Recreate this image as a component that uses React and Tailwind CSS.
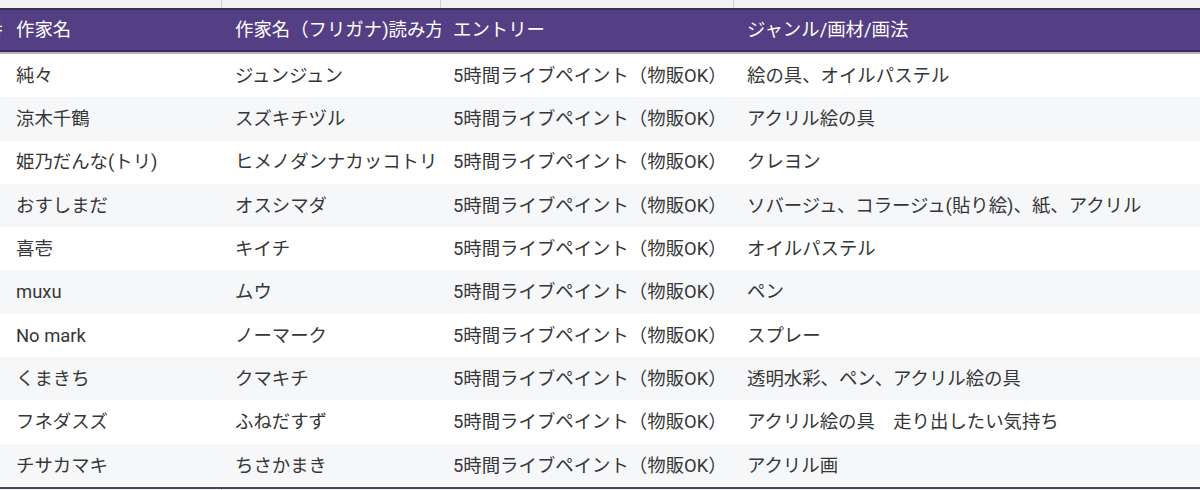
import React from "react";

const rows = [
  ["純々", "ジュンジュン", "5時間ライブペイント（物販OK）", "絵の具、オイルパステル"],
  ["涼木千鶴", "スズキチヅル", "5時間ライブペイント（物販OK）", "アクリル絵の具"],
  ["姫乃だんな(トリ)", "ヒメノダンナカッコトリ", "5時間ライブペイント（物販OK）", "クレヨン"],
  ["おすしまだ", "オスシマダ", "5時間ライブペイント（物販OK）", "ソバージュ、コラージュ(貼り絵)、紙、アクリル"],
  ["喜壱", "キイチ", "5時間ライブペイント（物販OK）", "オイルパステル"],
  ["muxu", "ムウ", "5時間ライブペイント（物販OK）", "ペン"],
  ["No mark", "ノーマーク", "5時間ライブペイント（物販OK）", "スプレー"],
  ["くまきち", "クマキチ", "5時間ライブペイント（物販OK）", "透明水彩、ペン、アクリル絵の具"],
  ["フネダスズ", "ふねだすず", "5時間ライブペイント（物販OK）", "アクリル絵の具　走り出したい気持ち"],
  ["チサカマキ", "ちさかまき", "5時間ライブペイント（物販OK）", "アクリル画"],
];

const font = { fontFamily: 'Roboto, "Noto Sans CJK JP", sans-serif' };

export default function App() {
  return (
    <div className="w-[1200px] h-[490px] overflow-hidden bg-[#f3f3f3] text-[18.4px]" style={font}>
      {/* top strip */}
      <div className="flex h-[8px] bg-[#f2f2f2]">
        <div className="w-[222px] shrink-0 border-r border-[#cfcfcf]" />
        <div className="w-[219px] shrink-0 border-r border-[#cfcfcf]" />
        <div className="w-[293px] shrink-0 border-r border-[#cfcfcf]" />
        <div className="flex-1" />
      </div>
      {/* header */}
      <div className="flex h-[44px] items-center border-y-2 border-[#3b2d5f] bg-[#553f84] text-white whitespace-nowrap">
        <div className="w-[3px] shrink-0 overflow-hidden flex justify-end">
          <span className="shrink-0">番</span>
        </div>
        <div className="w-[219px] shrink-0 overflow-hidden pl-[13px]">作家名</div>
        <div className="w-[219px] shrink-0 overflow-hidden pl-[13px]">作家名（フリガナ)読み方</div>
        <div className="w-[293px] shrink-0 overflow-hidden pl-[12px]">エントリー</div>
        <div className="flex-1 overflow-hidden pl-[13px]">ジャンル/画材/画法</div>
      </div>
      <div className="h-[2px] bg-[#b8b4bc]" />
      {/* body */}
      <div className="border-b-2 border-[#4a4356]">
        {rows.map((r, i) => (
          <div
            key={i}
            className={`flex h-[43.3px] items-center whitespace-nowrap text-[#363636] ${i % 2 === 0 ? "bg-white" : "bg-[#f6f7f9]"}`}
          >
            <div className="w-[3px] shrink-0" />
            <div className="w-[219px] shrink-0 overflow-hidden pl-[13px]">{r[0]}</div>
            <div className="w-[219px] shrink-0 overflow-hidden pl-[13px]">{r[1]}</div>
            <div className="w-[293px] shrink-0 overflow-hidden pl-[12px]">{r[2]}</div>
            <div className="flex-1 overflow-hidden pl-[13px]">{r[3]}</div>
          </div>
        ))}
      </div>
      <div className="flex h-[4px] bg-[#f2f2f2]">
        <div className="w-[222px] shrink-0 border-r border-[#cfcfcf]" />
        <div className="flex-1" />
      </div>
    </div>
  );
}
